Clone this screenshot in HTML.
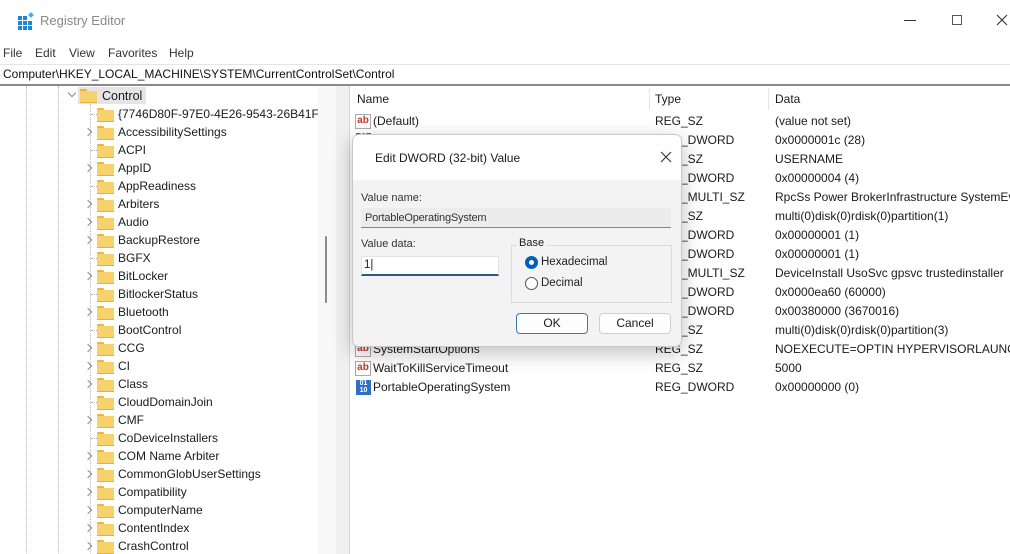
<!DOCTYPE html>
<html><head><meta charset="utf-8">
<style>
*{margin:0;padding:0;box-sizing:border-box}
body{width:1010px;height:554px;overflow:hidden;background:#fff;font-family:"Liberation Sans",sans-serif;font-size:12px;color:#1a1a1a;position:relative}
.a{position:absolute;white-space:nowrap}
.fold{position:absolute;width:17px;height:13px}
.fold:before{content:"";position:absolute;left:0;top:0;width:7px;height:3px;background:#e8b73a;border-radius:1px 1px 0 0}
.fold:after{content:"";position:absolute;left:0;top:2px;width:17px;height:11px;background:#f7d26b;border-bottom:1px solid #e2b240}
.chev{position:absolute;width:6px;height:6px;border-right:1.3px solid #888;border-bottom:1.3px solid #888;transform:rotate(-45deg)}
.dot{position:absolute;border-left:1px dotted #bbb}
.doth{position:absolute;border-top:1px dotted #aaa;width:6px}
.ico{position:absolute;width:16px;height:15px;font-size:10px;font-weight:bold;color:#c0392b;border:1px solid #aaa;background:#fff;line-height:12px;text-align:center}
</style></head><body>
<svg class="a" style="left:18px;top:12px" width="16" height="18" viewBox="0 0 16 18"><g fill="#1b87d6"><rect x="0" y="4" width="4" height="4"/><rect x="5" y="4" width="4" height="4"/><rect x="0" y="9" width="4" height="4"/><rect x="5" y="9" width="4" height="4"/><rect x="10" y="9" width="4" height="4"/><rect x="0" y="14" width="4" height="4"/><rect x="5" y="14" width="4" height="4"/><rect x="10" y="14" width="4" height="4"/><rect x="11" y="1" width="4" height="4" transform="rotate(45 13 3)" fill="#46a8ec"/></g></svg>
<div class="a" style="left:40px;top:13px;font-size:13px;color:#888">Registry Editor</div>
<div class="a" style="left:904px;top:20px;width:12px;border-top:1px solid #333"></div>
<div class="a" style="left:952px;top:15px;width:10px;height:10px;border:1px solid #555"></div>
<svg class="a" style="left:996px;top:14px" width="12" height="12"><path d="M1 1L11 11M11 1L1 11" stroke="#333" stroke-width="1.1"/></svg>
<div class="a" style="left:3px;top:46px;color:#333">File</div>
<div class="a" style="left:35px;top:46px;color:#333">Edit</div>
<div class="a" style="left:69px;top:46px;color:#333">View</div>
<div class="a" style="left:108px;top:46px;color:#333">Favorites</div>
<div class="a" style="left:169px;top:46px;color:#333">Help</div>
<div class="a" style="left:0;top:64px;width:1010px;border-top:1px solid #e5e5e5"></div>
<div class="a" style="left:3px;top:67px;color:#111">Computer\HKEY_LOCAL_MACHINE\SYSTEM\CurrentControlSet\Control</div>
<div class="a" style="left:0;top:84px;width:1010px;border-top:2px solid #8a8a8a"></div>
<div class="dot" style="left:26px;top:86px;height:468px"></div>
<div class="dot" style="left:58px;top:86px;height:468px"></div>
<div class="dot" style="left:90px;top:104px;height:450px"></div>
<div class="a" style="left:78px;top:87px;width:68px;height:17px;background:#e5e5e5"></div>
<div class="chev" style="left:69px;top:90px;transform:rotate(45deg)"></div>
<div class="fold" style="left:80px;top:89px"></div>
<div class="a" style="left:102px;top:89px;font-size:12.5px">Control</div>
<div id="tree"></div>
<div class="a" style="left:318px;top:86px;width:18px;height:468px;background:#f8f8f8"></div>
<div class="a" style="left:325px;top:236px;width:2px;height:67px;background:#8a8a8a;border-radius:1px"></div>
<div class="a" style="left:336px;top:86px;width:14px;height:468px;background:#f0f0f0"></div>
<div class="a" style="left:349px;top:86px;height:468px;border-left:1px solid #d6d6d6"></div>
<div class="a" style="left:357px;top:92px">Name</div>
<div class="a" style="left:649px;top:88px;height:22px;border-left:1px solid #e5e5e5"></div>
<div class="a" style="left:655px;top:92px">Type</div>
<div class="a" style="left:768px;top:88px;height:22px;border-left:1px solid #e5e5e5"></div>
<div class="a" style="left:775px;top:92px">Data</div>
<div id="list"></div>
<div class="a" style="left:352px;top:134px;width:330px;height:213px;background:#f3f3f3;border:1px solid #c8c8c8;border-radius:7px;box-shadow:0 6px 20px rgba(0,0,0,.25);overflow:hidden">
 <div style="position:absolute;left:0;top:0;width:330px;height:45px;background:#fff"></div>
 <div class="a" style="left:22px;top:16px;font-size:12px">Edit DWORD (32-bit) Value</div>
 <svg class="a" style="left:307px;top:16px" width="12" height="12"><path d="M1 1L11 11M11 1L1 11" stroke="#333" stroke-width="1.1"/></svg>
 <div class="a" style="left:8px;top:57px;font-size:11px;color:#333">Value name:</div>
 <div class="a" style="left:8px;top:73px;width:310px;height:20px;background:#ececec;border-bottom:1px solid #888"></div>
 <div class="a" style="left:12px;top:77px;font-size:11px;color:#333;letter-spacing:-.2px">PortableOperatingSystem</div>
 <div class="a" style="left:8px;top:103px;font-size:11px;color:#333">Value data:</div>
 <div class="a" style="left:8px;top:121px;width:138px;height:20px;background:#fff;border:1px solid #e2e2e2;border-bottom:2px solid #2d5a85"></div>
 <div class="a" style="left:11px;top:124px;font-size:11.5px">1|</div>
 <div class="a" style="left:158px;top:110px;width:161px;height:58px;border:1px solid #dcdcdc"></div>
 <div class="a" style="left:164px;top:102px;font-size:11px;background:#f3f3f3;padding:0 2px">Base</div>
 <div class="a" style="left:172px;top:121px;width:13px;height:13px;border-radius:50%;background:#005fb8"><div style="position:absolute;left:4px;top:4px;width:5px;height:5px;border-radius:50%;background:#fff"></div></div>
 <div class="a" style="left:188px;top:121px;font-size:11.5px;color:#222">Hexadecimal</div>
 <div class="a" style="left:172px;top:142px;width:13px;height:13px;border-radius:50%;border:1px solid #555;background:#fff"></div>
 <div class="a" style="left:188px;top:142px;font-size:11.5px;color:#222">Decimal</div>
 <div class="a" style="left:163px;top:178px;width:72px;height:21px;background:#fdfdfd;border:1px solid #3a79b8;border-radius:4px;text-align:center;line-height:19px;font-size:12px">OK</div>
 <div class="a" style="left:246px;top:178px;width:72px;height:21px;background:#fdfdfd;border:1px solid #d0d0d0;border-radius:4px;text-align:center;line-height:19px;font-size:12px">Cancel</div>
</div>
<script>
var t=[["{7746D80F-97E0-4E26-9543-26B41FC22",0],["AccessibilitySettings",1],["ACPI",0],["AppID",1],["AppReadiness",0],["Arbiters",1],["Audio",1],["BackupRestore",1],["BGFX",0],["BitLocker",1],["BitlockerStatus",0],["Bluetooth",1],["BootControl",0],["CCG",1],["CI",1],["Class",1],["CloudDomainJoin",0],["CMF",1],["CoDeviceInstallers",0],["COM Name Arbiter",1],["CommonGlobUserSettings",1],["Compatibility",1],["ComputerName",1],["ContentIndex",1],["CrashControl",1]];
var h="";t.forEach(function(r,i){var y=114+i*18;
h+=r[1]?'<div class="chev" style="left:85px;top:'+(y-3)+'px"></div>':'<div class="doth" style="left:91px;top:'+y+'px"></div>';
h+='<div class="fold" style="left:97px;top:'+(y-6)+'px"></div><div class="a" style="left:118px;top:'+(y-7)+'px;font-size:12px">'+r[0]+'</div>';});
document.getElementById("tree").innerHTML=h;
var L=[["(Default)","REG_SZ","(value not set)",0],["","REG_DWORD","0x0000001c (28)",1],["","REG_SZ","USERNAME",0],["","REG_DWORD","0x00000004 (4)",1],["","REG_MULTI_SZ","RpcSs Power BrokerInfrastructure SystemEve",0],["","REG_SZ","multi(0)disk(0)rdisk(0)partition(1)",0],["","REG_DWORD","0x00000001 (1)",1],["","REG_DWORD","0x00000001 (1)",1],["","REG_MULTI_SZ","DeviceInstall UsoSvc gpsvc trustedinstaller",0],["","REG_DWORD","0x0000ea60 (60000)",1],["","REG_DWORD","0x00380000 (3670016)",1],["","REG_SZ","multi(0)disk(0)rdisk(0)partition(3)",0],["SystemStartOptions","REG_SZ"," NOEXECUTE=OPTIN  HYPERVISORLAUNCHT",0],["WaitToKillServiceTimeout","REG_SZ","5000",0],["PortableOperatingSystem","REG_DWORD","0x00000000 (0)",1]];
h="";L.forEach(function(r,i){var y=113+i*19;
h+=r[3]?'<div class="a" style="left:356px;top:'+(y+1)+'px;width:15px;height:15px;background:#2f6fc6;color:#fff;font-size:7px;line-height:7px;text-align:center;font-weight:bold">01<br>10</div>':'<div class="ico" style="left:355px;top:'+(y+1)+'px">ab</div>';
h+='<div class="a" style="left:373px;top:'+(y+1)+'px">'+r[0]+'</div><div class="a" style="left:655px;top:'+(y+1)+'px">'+r[1]+'</div><div class="a" style="left:775px;top:'+(y+1)+'px">'+r[2]+'</div>';});
document.getElementById("list").innerHTML=h;
</script>
</body></html>
